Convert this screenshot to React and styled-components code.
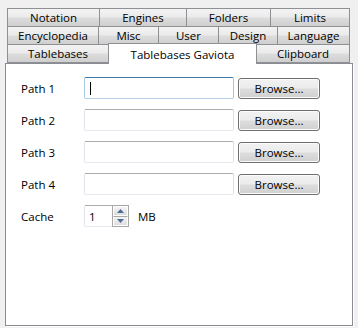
import React from "react";
import styled, { createGlobalStyle } from "styled-components";

const GlobalStyle = createGlobalStyle`
  html, body {
    margin: 0;
    padding: 0;
    background: #f0f0f0;
  }
  body {
    font-family: "Open Sans", "Liberation Sans", sans-serif;
    font-size: 11.5px;
    color: #000;
  }
`;

const Dialog = styled.div`
  width: 358px;
  height: 328px;
  box-sizing: border-box;
  padding: 9px 5px 0 5px;
  display: flex;
  flex-direction: column;
`;

const TabBar = styled.div`
  display: flex;
  flex-direction: column;
  margin-left: 2px;
  position: relative;
  z-index: 1;
`;

const TabRow = styled.div`
  display: flex;
  align-items: flex-end;
  height: 18px;
`;

const Tab = styled.div`
  width: ${props => props.w}px;
  height: ${props => (props.selected ? 21 : 19)}px;
  margin-right: -1px;
  box-sizing: border-box;
  display: flex;
  align-items: center;
  justify-content: center;
  border: 1px solid #8f9094;
  border-bottom: ${props => (props.selected ? "none" : "1px solid #8f9094")};
  background: ${props =>
    props.selected
      ? "#ffffff"
      : "linear-gradient(to bottom, #f3f3f3 0%, #ebebeb 45%, #dcdcdc 55%, #cfcfcf 100%)"};
  color: #000;
  font-weight: ${props => (props.selected ? 400 : 500)};
  white-space: nowrap;
  position: relative;
  z-index: ${props => (props.selected ? 2 : 0)};
  margin-bottom: ${props => (props.selected ? "-1px" : "0")};
  &:last-child {
    margin-right: 0;
  }
`;

const Panel = styled.div`
  width: 348px;
  height: 263px;
  box-sizing: border-box;
  background: #ffffff;
  border: 1px solid #8a8c94;
  box-shadow: 1px 1px 0 #ffffff;
  padding: 13px 0 0 15px;
  display: flex;
  flex-direction: column;
  gap: 10px;
`;

const Row = styled.div`
  display: flex;
  align-items: center;
  height: 22px;
`;

const Label = styled.span`
  width: 63px;
  white-space: nowrap;
`;

const PathInput = styled.div`
  width: 150px;
  height: 22px;
  box-sizing: border-box;
  border: 1px solid;
  border-color: ${props =>
    props.focused ? "#3d7bad #a4c9e3 #b5cfe7 #a4c9e3" : "#abadb3 #dbdfe6 #e3e9ef #e2e3ea"};
  border-radius: 2px;
  background: #fff;
  display: flex;
  align-items: center;
  padding-left: 5px;
`;

const Caret = styled.span`
  width: 1px;
  height: 13px;
  background: #000;
`;

const BrowseButton = styled.button`
  margin-left: 4px;
  width: 82px;
  height: 21px;
  box-sizing: border-box;
  border: 1px solid #707070;
  border-radius: 3px;
  background: linear-gradient(to bottom, #f2f2f2 0%, #ebebeb 49%, #dddddd 51%, #cfcfcf 100%);
  box-shadow: inset 0 0 0 1px #fcfcfc;
  font-family: inherit;
  font-size: inherit;
  color: #000;
  padding: 0;
`;

const SpinBox = styled.div`
  display: flex;
  width: 45px;
  height: 22px;
  box-sizing: border-box;
  border: 1px solid;
  border-color: #abadb3 #dbdfe6 #e3e9ef #e2e3ea;
  border-radius: 2px;
  background: #fff;
`;

const SpinValue = styled.div`
  flex: 1;
  display: flex;
  align-items: center;
  padding-left: 4px;
`;

const SpinButtons = styled.div`
  width: 17px;
  display: flex;
  flex-direction: column;
  border: 1px solid #a8a8a8;
  margin: -1px -1px -1px 0;
  box-sizing: border-box;
`;

const SpinButton = styled.div`
  flex: 1;
  display: flex;
  align-items: center;
  justify-content: center;
  background: linear-gradient(to bottom, #f4f4f4, #dedede);
  border: 1px solid #fff;
  & + & {
    border-top: 1px solid #a8a8a8;
  }
`;

const Unit = styled.span`
  margin-left: 9px;
`;

const Arrow = ({ up }) => (
  <svg width="7" height="4" viewBox="0 0 7 4">
    <path d={up ? "M0 4 L3.5 0 L7 4 Z" : "M0 0 L3.5 4 L7 0 Z"} fill="#4f6a96" />
  </svg>
);

const rows = [
  [
    { name: "Notation", w: 93 },
    { name: "Engines", w: 88 },
    { name: "Folders", w: 85 },
    { name: "Limits", w: 80 },
  ],
  [
    { name: "Encyclopedia", w: 92 },
    { name: "Misc", w: 61 },
    { name: "User", w: 61 },
    { name: "Design", w: 60 },
    { name: "Language", w: 73 },
  ],
  [
    { name: "Tablebases", w: 102 },
    { name: "Tablebases Gaviota", w: 149, selected: true },
    { name: "Clipboard", w: 94 },
  ],
];

const paths = ["Path 1", "Path 2", "Path 3", "Path 4"];

export default function App() {
  return (
    <>
      <GlobalStyle />
      <Dialog>
        <TabBar>
          {rows.map((row, i) => (
            <TabRow key={i}>
              {row.map(tab => (
                <Tab key={tab.name} w={tab.w} selected={tab.selected}>
                  {tab.name}
                </Tab>
              ))}
            </TabRow>
          ))}
        </TabBar>
        <Panel>
          {paths.map((p, i) => (
            <Row key={p}>
              <Label>{p}</Label>
              <PathInput focused={i === 0}>{i === 0 && <Caret />}</PathInput>
              <BrowseButton>Browse...</BrowseButton>
            </Row>
          ))}
          <Row>
            <Label>Cache</Label>
            <SpinBox>
              <SpinValue>1</SpinValue>
              <SpinButtons>
                <SpinButton>
                  <Arrow up />
                </SpinButton>
                <SpinButton>
                  <Arrow />
                </SpinButton>
              </SpinButtons>
            </SpinBox>
            <Unit>MB</Unit>
          </Row>
        </Panel>
      </Dialog>
    </>
  );
}
